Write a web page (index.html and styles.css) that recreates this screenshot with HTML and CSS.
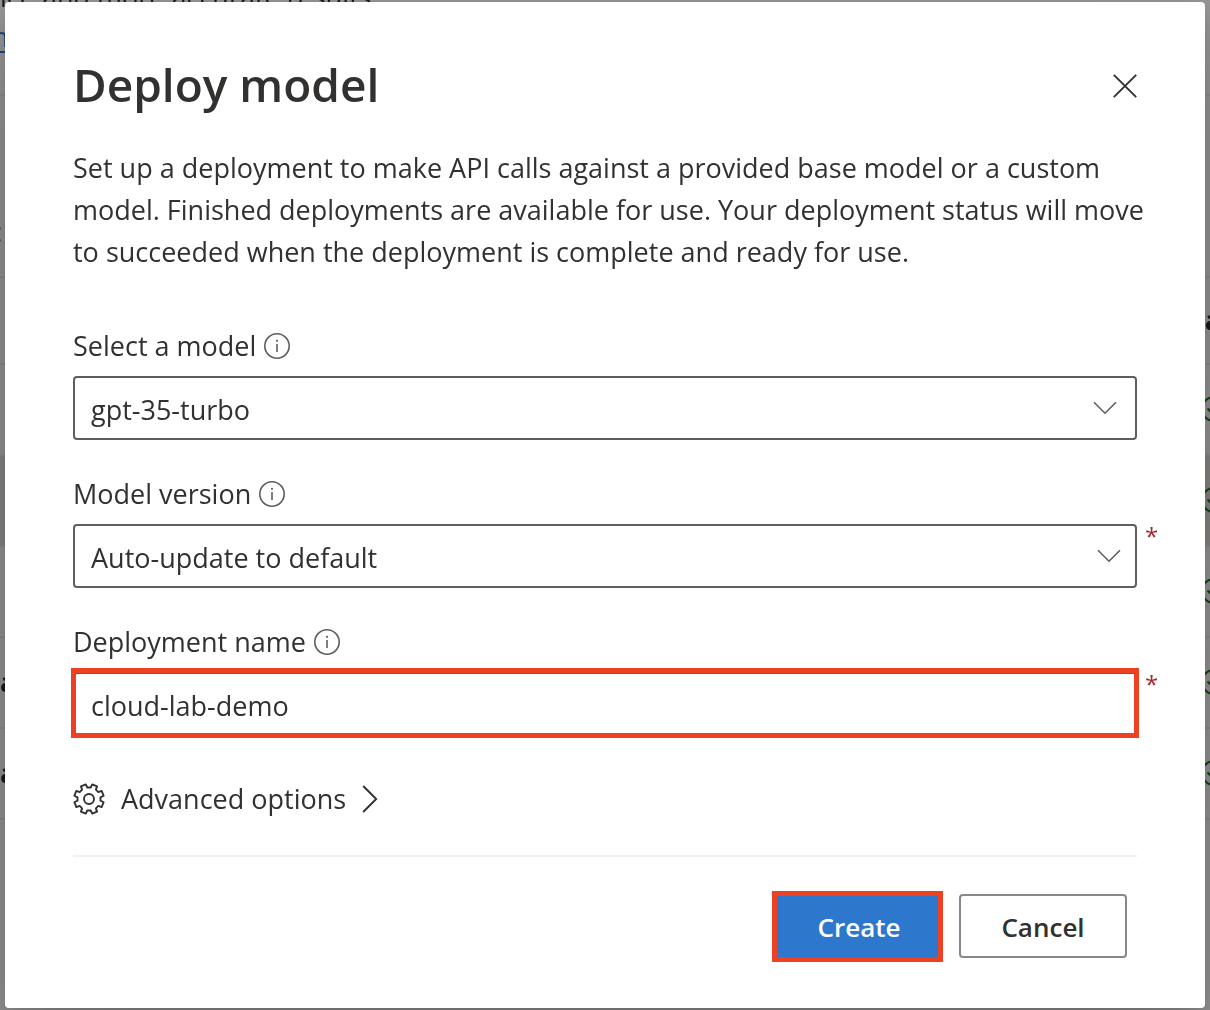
FILE: index.html
```html
<!DOCTYPE html>
<html lang="en">
<head>
<meta charset="utf-8">
<meta name="viewport" content="width=device-width, initial-scale=1">
<title>Deploy model</title>
<link rel="stylesheet" href="styles.css">
</head>
<body>
<svg class="sprite" aria-hidden="true">
  <symbol id="info" viewBox="0 0 26 26">
    <circle cx="13" cy="13" r="12.2" fill="none" stroke="currentColor" stroke-width="1.6"/>
    <path d="M13 11v8" fill="none" stroke="currentColor" stroke-width="1.6"/>
    <circle cx="13" cy="7.8" r="1.1" fill="currentColor"/>
  </symbol>
  <symbol id="chevron" viewBox="0 0 24 14">
    <path d="M1 1.2l11 11 11-11" fill="none" stroke="currentColor" stroke-width="1.6"/>
  </symbol>
  <symbol id="status" viewBox="0 0 26 26">
    <circle cx="13" cy="13" r="12" fill="none" stroke="currentColor" stroke-width="2"/>
    <path d="M6.5 12.5l4.5 4.5 8.5-8.5" fill="none" stroke="currentColor" stroke-width="2"/>
  </symbol>
</svg>

<div class="page" aria-hidden="true">
  <div class="notice"><p class="notice-text">ice and more accurate results.</p><span class="notice-link">n</span></div>
  <div class="toolbar"><span>c</span></div>
  <div class="row head"><span></span><b>a</b></div>
  <div class="row"><span></span><svg class="status"><use href="#status"/></svg></div>
  <div class="row selected"><span></span><svg class="status"><use href="#status"/></svg></div>
  <div class="row"><span></span><svg class="status"><use href="#status"/></svg></div>
  <div class="row"><b>a</b><svg class="status"><use href="#status"/></svg></div>
  <div class="row"><b>a</b><svg class="status"><use href="#status"/></svg></div>
</div>

<main class="dialog" role="dialog" aria-modal="true" aria-labelledby="title">
  <header class="dialog-head">
    <h1 id="title">Deploy model</h1>
    <button class="close" type="button" aria-label="Close">
      <svg viewBox="0 0 24 24"><path d="M.8.8l22.4 22.4M23.2.8L.8 23.2" fill="none" stroke="currentColor" stroke-width="1.9"/></svg>
    </button>
  </header>
  <p class="intro">Set up a deployment to make API calls against a provided base model or a custom model. Finished deployments are available for use. Your deployment status will move to succeeded when the deployment is complete and ready for use.</p>

  <form class="form">
    <div class="field">
      <div class="label"><label for="model">Select a model</label><svg class="info"><use href="#info"/></svg></div>
      <div class="control">
        <select id="model"><option>gpt-35-turbo</option></select>
        <svg class="chevron"><use href="#chevron"/></svg>
      </div>
    </div>
    <div class="field">
      <div class="label"><label for="version">Model version</label><svg class="info"><use href="#info"/></svg></div>
      <div class="control required">
        <select id="version"><option>Auto-update to default</option></select>
        <svg class="chevron"><use href="#chevron"/></svg>
      </div>
    </div>
    <div class="field">
      <div class="label"><label for="name">Deployment name</label><svg class="info"><use href="#info"/></svg></div>
      <div class="control required highlight">
        <input id="name" type="text" value="cloud-lab-demo">
      </div>
    </div>

    <button class="advanced" type="button">
      <svg class="gear" viewBox="-16 -16 32 32" fill="none" stroke="currentColor" stroke-width="1.9" stroke-linejoin="round">
        <path d="M11.47 1.71L14.64 3.25L12.65 8.06L9.32 6.9L6.9 9.32L8.06 12.65L3.25 14.64L1.71 11.47L-1.71 11.47L-3.25 14.64L-8.06 12.65L-6.9 9.32L-9.32 6.9L-12.65 8.06L-14.64 3.25L-11.47 1.71L-11.47 -1.71L-14.64 -3.25L-12.65 -8.06L-9.32 -6.9L-6.9 -9.32L-8.06 -12.65L-3.25 -14.64L-1.71 -11.47L1.71 -11.47L3.25 -14.64L8.06 -12.65L6.9 -9.32L9.32 -6.9L12.65 -8.06L14.64 -3.25L11.47 -1.71Z"/>
        <circle r="5"/>
      </svg>
      <span>Advanced options</span>
      <svg class="more" viewBox="0 0 16 28"><path d="M1.2 1l13 13-13 13" fill="none" stroke="currentColor" stroke-width="1.9"/></svg>
    </button>

    <footer class="actions">
      <button class="btn primary" type="submit">Create</button>
      <button class="btn" type="button">Cancel</button>
    </footer>
  </form>
</main>
</body>
</html>
```

FILE: styles.css
```css
* { box-sizing: border-box; }

body {
  margin: 0;
  min-height: 100vh;
  padding: 2px 5px;
  display: flex;
  background: #999;
  color: #323130;
  font-family: "Open Sans", "Noto Sans", sans-serif;
  font-size: 27px;
  line-height: 32px;
}

button, input, select { font: inherit; color: inherit; }
.sprite { position: absolute; width: 0; height: 0; }

/* Page behind the dialog */
.page { position: fixed; inset: 0; overflow: hidden; color: #1b1a19; }
.notice { display: flow-root; height: 96px; border-bottom: 2px solid #8f8f8f; }
.notice-text { margin: -19px 0 0; white-space: nowrap; }
.notice-link { display: inline-block; margin: 10px 0 0 -8px; line-height: 28px; color: #1a4a86; border-bottom: 2px solid #1a4a86; }
.toolbar { height: 182px; padding-top: 120px; border-bottom: 2px solid #8f8f8f; color: #555; }
.toolbar span { margin-left: -11px; }
.row { height: 91px; padding-bottom: 2px; display: flex; align-items: center; justify-content: space-between; border-bottom: 2px solid #8f8f8f; }
.head { height: 87px; }
.head b { margin-right: -11px; }
.selected { background: #8c8a88; }
.status { width: 26px; height: 26px; margin-right: -17px; color: #0e4a0e; }

/* Dialog */
.dialog {
  position: relative;
  flex: 1;
  padding: 50px 68px 48px;
  background: #fff;
  border-radius: 4px;
  box-shadow: 0 51px 115px rgba(0, 0, 0, .22), 0 10px 29px rgba(0, 0, 0, .18);
}
.dialog-head { display: flex; align-items: center; justify-content: space-between; }
h1 { margin: 0; font-size: 46px; line-height: 64px; font-weight: 600; }
.close { display: flex; padding: 4px 0 0; border: 0; background: none; }
.close svg { width: 24px; height: 24px; }
.intro { margin: 31px -16px 0 0; line-height: 42px; }

.form { display: flex; flex-direction: column; gap: 38px; margin-top: 57px; }
.label { display: flex; align-items: center; gap: 8px; padding-bottom: 14px; }
.info { width: 26px; height: 26px; color: #605e5c; }
.control { position: relative; display: flex; }
select, input {
  width: 100%;
  height: 64px;
  padding: 2px 16px 0;
  border: 2px solid #605e5c;
  border-radius: 4px;
  background: #fff;
  line-height: 40px;
  appearance: none;
}
select { padding-top: 4px; }
.chevron { position: absolute; right: 20px; top: 25px; width: 24px; height: 14px; color: #605e5c; pointer-events: none; }
.required .chevron { right: 16px; }
.required::before { content: "*"; position: absolute; left: 100%; top: 0; margin-left: 8px; font-size: 24px; line-height: 24px; color: #a4262c; }
.highlight::after { content: ""; position: absolute; inset: -4px -2px -2px; border: 5px solid #ee4023; pointer-events: none; }

.advanced { display: flex; align-items: center; align-self: flex-start; gap: 16px; padding: 9px 0 2px; border: 0; background: none; }
.gear { width: 32px; height: 32px; }
.more { width: 16px; height: 28px; }

.actions { display: flex; justify-content: flex-end; gap: 16px; padding: 37px 10px 0 0; border-top: 2px solid #f0f0f0; }
.btn { position: relative; width: 168px; height: 64px; padding: 2px 0 0; border: 2px solid #8a8886; border-radius: 4px; background: #fff; font-size: 26px; font-weight: 600; }
.primary { border-color: #2d78cd; background: #2d78cd; color: #fff; }
.primary::after { content: ""; position: absolute; inset: -5px -2px -6px -5px; border: 5px solid #ee4023; }
```
